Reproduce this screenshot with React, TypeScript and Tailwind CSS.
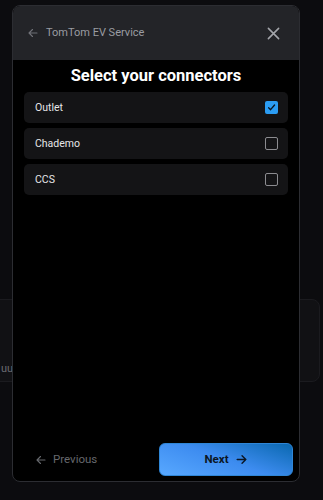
import React from "react";

function Row({ label, checked }: { label: string; checked?: boolean }) {
  return (
    <div className="flex h-[31px] items-center justify-between rounded-[5px] bg-[#141416] pl-[11px] pr-[10px]">
      <span className="text-[10.5px] text-[#e6e6e8]">{label}</span>
      {checked ? (
        <span className="flex h-[13px] w-[13px] items-center justify-center rounded-[2px] bg-[#2b9cf2]">
          <svg width="9" height="9" viewBox="0 0 10 10" fill="none">
            <path d="M1.8 5.2 L4 7.4 L8.4 2.2" stroke="#0b1622" strokeWidth="1.5" strokeLinecap="round" strokeLinejoin="round" />
          </svg>
        </span>
      ) : (
        <span className="h-[13px] w-[13px] rounded-[2px] border-[1.5px] border-[#8c8c90]" />
      )}
    </div>
  );
}

export default function App() {
  return (
    <div
      className="relative h-[500px] w-[323px] overflow-hidden bg-[#0c0c0f]"
      style={{ fontFamily: "Roboto, 'Noto Sans', sans-serif" }}
    >
      <div className="absolute left-[-12px] top-[299px] h-[83px] w-[332px] rounded-[8px] border border-[#1b1b1f] bg-[#111114]">
        <span className="absolute left-[12px] top-[61px] text-[11px] text-[#6a6b70]">uur</span>
      </div>
      <div className="absolute left-[12px] top-[5px] flex h-[477px] w-[288px] flex-col overflow-hidden rounded-[8px] border border-[#2c2d32] bg-black">
        <div className="flex h-[54px] shrink-0 items-center bg-[#232428] pl-[14px] pr-[19px]">
          <svg width="12" height="12" viewBox="0 0 24 24" fill="none" stroke="#6f7177" strokeWidth="2.2" strokeLinecap="round" strokeLinejoin="round">
            <path d="M20 12H4M11 5l-7 7 7 7" />
          </svg>
          <span className="ml-[7px] text-[11px] text-[#9a9ca2]">TomTom EV Service</span>
          <svg className="ml-auto" width="13" height="13" viewBox="0 0 14 14" fill="none" stroke="#a3a5aa" strokeWidth="1.7" strokeLinecap="round">
            <path d="M1.5 1.5l11 11M12.5 1.5l-11 11" />
          </svg>
        </div>
        <div className="flex flex-1 flex-col px-[11px]">
          <h1 className="mt-[3px] text-center text-[16.5px] font-bold leading-[26px] text-white">Select your connectors</h1>
          <div className="mt-[3px] flex flex-col gap-[5px]">
            <Row label="Outlet" checked />
            <Row label="Chademo" />
            <Row label="CCS" />
          </div>
        </div>
        <div className="flex items-center justify-between pb-[5px] pl-[22px] pr-[6px]">
          <div className="flex items-center gap-[6px] text-[11.5px] text-[#66686d]">
            <svg width="12" height="12" viewBox="0 0 24 24" fill="none" stroke="#66686d" strokeWidth="2.2" strokeLinecap="round" strokeLinejoin="round">
              <path d="M20 12H4M11 5l-7 7 7 7" />
            </svg>
            <span>Previous</span>
          </div>
          <div className="flex h-[33px] w-[134px] items-center justify-center gap-[6px] rounded-[6px] border border-[#2f86d6] bg-[linear-gradient(20deg,#58a8ff_0%,#3d8cf0_50%,#0a68b0_100%)] text-[11.5px] font-bold text-[#0b1624]">
            <span>Next</span>
            <svg width="13" height="13" viewBox="0 0 24 24" fill="none" stroke="#0b1624" strokeWidth="2.6" strokeLinecap="round" strokeLinejoin="round">
              <path d="M4 12h16M13 5l7 7-7 7" />
            </svg>
          </div>
        </div>
      </div>
    </div>
  );
}
